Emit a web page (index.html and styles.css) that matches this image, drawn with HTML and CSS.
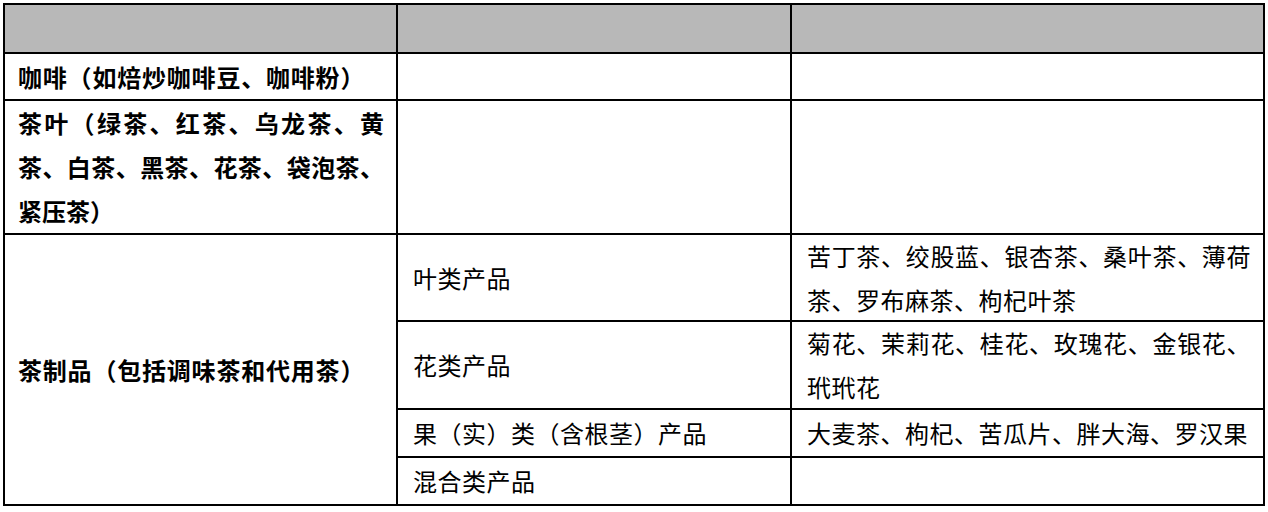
FILE: index.html
```html
<!DOCTYPE html>
<html lang="zh-CN">
<head>
<meta charset="utf-8">
<link rel="stylesheet" href="styles.css">
</head>
<body>
<div class="sheet">
  <div class="cell head"></div>
  <div class="cell head"></div>
  <div class="cell head"></div>

  <div class="cell bold"><div class="txt">咖啡（如焙炒咖啡豆、咖啡粉）</div></div>
  <div class="cell"></div>
  <div class="cell"></div>

  <div class="cell bold"><div class="txt">
    <span class="line just">茶叶（绿茶、红茶、乌龙茶、黄</span>
    <span class="line just">茶、白茶、黑茶、花茶、袋泡茶、</span>
    <span class="line">紧压茶）</span>
  </div></div>
  <div class="cell"></div>
  <div class="cell"></div>

  <div class="cell bold span4"><div class="txt">茶制品（包括调味茶和代用茶）</div></div>
  <div class="cell"><div class="txt">叶类产品</div></div>
  <div class="cell"><div class="txt wrap">苦丁茶、绞股蓝、银杏茶、桑叶茶、薄荷茶、罗布麻茶、枸杞叶茶</div></div>

  <div class="cell"><div class="txt">花类产品</div></div>
  <div class="cell"><div class="txt wrap">菊花、茉莉花、桂花、玫瑰花、金银花、玳玳花</div></div>

  <div class="cell"><div class="txt">果（实）类（含根茎）产品</div></div>
  <div class="cell"><div class="txt wrap">大麦茶、枸杞、苦瓜片、胖大海、罗汉果</div></div>

  <div class="cell"><div class="txt">混合类产品</div></div>
  <div class="cell"></div>
</div>
</body>
</html>
```

FILE: styles.css
```css
html, body {
  margin: 0;
  padding: 0;
  background: #ffffff;
}

body {
  font-family: "Noto Sans CJK SC", "Noto Sans", sans-serif;
  color: #000000;
}

.sheet {
  margin: 3px 0 0 3px;
  width: 1262px;
  box-sizing: border-box;
  display: grid;
  grid-template-columns: 391px 392px 471px;
  grid-template-rows: 47px 45px 132px 85px 86px 46px 46px;
  gap: 2px;
  padding: 2px;
  background: #000000;
}

.cell {
  background: #ffffff;
  display: flex;
  align-items: center;
  padding: 0 12px 0 15px;
  min-width: 0;
  font-size: 24px;
  letter-spacing: 0.5px;
  line-height: 44px;
}

.head {
  background: #b8b8b8;
}

.bold {
  font-weight: 700;
  padding-left: 13px;
  letter-spacing: 0.8px;
}

.span4 {
  grid-row: span 4;
}

.txt {
  width: 100%;
  white-space: nowrap;
}

.txt.wrap {
  white-space: normal;
  text-align: justify;
}

.line {
  display: block;
  white-space: nowrap;
  letter-spacing: 0;
}

.line.just {
  text-align: justify;
  text-align-last: justify;
}
```
